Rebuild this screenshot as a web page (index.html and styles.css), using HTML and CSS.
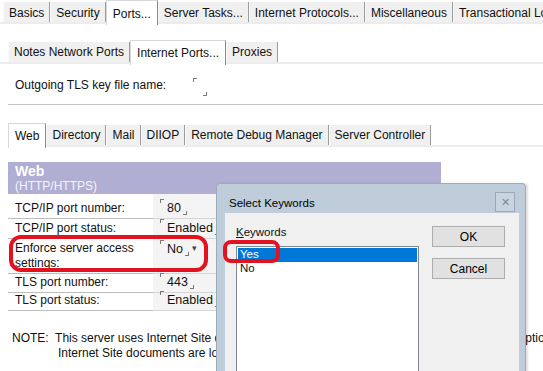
FILE: index.html
```html
<!DOCTYPE html>
<html lang="en">
<head>
    <meta charset="UTF-8">
    <title>Server Document - Ports</title>
    <link rel="stylesheet" href="styles.css">
</head>
<body>
    <div class="tabs top-tabs">
        <a class="tab">Basics</a>
        <a class="tab">Security</a>
        <a class="tab active">Ports...</a>
        <a class="tab">Server Tasks...</a>
        <a class="tab">Internet Protocols...</a>
        <a class="tab">Miscellaneous</a>
        <a class="tab">Transactional Logging</a>
    </div>

    <div class="tabs sub-tabs">
        <a class="tab">Notes Network Ports</a>
        <a class="tab active">Internet Ports...</a>
        <a class="tab">Proxies</a>
    </div>

    <div class="field-row">
        <span class="field-label">Outgoing TLS key file name:</span>
        <span class="field"><span class="mk-tl"></span><span class="mk-br"></span></span>
    </div>

    <div class="tabs proto-tabs">
        <a class="tab active">Web</a>
        <a class="tab">Directory</a>
        <a class="tab">Mail</a>
        <a class="tab">DIIOP</a>
        <a class="tab">Remote Debug Manager</a>
        <a class="tab">Server Controller</a>
    </div>

    <div class="settings">
        <div class="settings-head">
            <div class="head-title">Web</div>
            <div class="head-sub">(HTTP/HTTPS)</div>
        </div>
        <div class="cell label">TCP/IP port number:</div>
        <div class="cell value"><span class="val"><span class="mk-tl"></span>80<span class="mk-br"></span></span></div>
        <div class="cell label">TCP/IP port status:</div>
        <div class="cell value"><span class="val"><span class="mk-tl"></span>Enabled<span class="mk-br"></span></span></div>
        <div class="cell label">Enforce server access<br>settings:</div>
        <div class="cell value value-top"><span class="val"><span class="mk-tl"></span>No<span class="mk-br"></span><span class="drop">&#9662;</span></span></div>
        <div class="cell label">TLS port number:</div>
        <div class="cell value"><span class="val"><span class="mk-tl"></span>443<span class="mk-br"></span></span></div>
        <div class="cell label">TLS port status:</div>
        <div class="cell value"><span class="val"><span class="mk-tl"></span>Enabled<span class="mk-br"></span></span></div>
    </div>

    <p class="note">NOTE:&nbsp; This server uses Internet Site documents to configure Internet protocols. All server port options<br>Internet Site documents are located in the Web Configurations view.</p>

    <!-- highlight marks drawn over the form -->
    <div class="mark mark-row"></div>

    <!-- Select Keywords dialog -->
    <div class="dialog">
        <div class="dialog-title">
            <span>Select Keywords</span>
            <span class="dialog-close">&#10005;</span>
        </div>
        <div class="dialog-body">
            <div class="keywords">
                <div class="kw-label"><u>K</u>eywords</div>
                <div class="kw-list">
                    <div class="kw-item selected">Yes</div>
                    <div class="kw-item">No</div>
                </div>
            </div>
            <div class="dialog-buttons">
                <button class="btn">OK</button>
                <button class="btn">Cancel</button>
            </div>
        </div>
    </div>

    <div class="mark mark-yes"></div>
</body>
</html>
```

FILE: styles.css
```css
body {
    font-family: "Liberation Sans", Arial, sans-serif;
    font-size: 12px;
    color: #111;
    margin: 0;
    background: #fff;
    overflow: hidden;
}
.tabs {
    display: flex;
    height: 22px;
    border-bottom: 2px solid #ececec;
    white-space: nowrap;
}
.tab {
    background: #f0f0f0;
    border-right: 1px solid #9c9c9c;
    border-left: 1px solid #fafafa;
    padding: 0 5px;
    line-height: 21px;
    margin-top: 2px;
    cursor: pointer;
}
.tab.active {
    background: #fff;
    margin-top: 0;
    height: 24px;
    line-height: 24px;
    border-left: 1px solid #d8d8d8;
    border-top: 1px solid #d8d8d8;
    border-right: 1px solid #8a8a8a;
    padding: 0 6px;
}
.top-tabs {
    padding-left: 3px;
}
.top-tabs .tab {
    line-height: 23px;
}
.top-tabs .tab.active {
    line-height: 26px;
}
.sub-tabs {
    margin-top: 16px;
    padding-left: 8px;
}
.proto-tabs {
    margin: 18px 0 0 8px;
}
.field-row {
    margin-left: 8px;
    height: 38px;
    border-bottom: 1px solid #c4c4c4;
    display: flex;
    align-items: center;
    padding: 2px 0 0 7px;
}
.field {
    position: relative;
    display: inline-block;
    width: 14px;
    height: 16px;
    margin-left: 27px;
    top: 1px;
}
.field .mk-tl {
    position: absolute;
    left: 0;
    top: 0;
}
.field .mk-br {
    position: absolute;
    right: 0;
    bottom: -2px;
}
.mk-tl, .mk-br {
    display: inline-block;
    width: 3px;
    height: 3px;
}
.mk-tl {
    border-top: 1px solid #7a7a7a;
    border-left: 1px solid #7a7a7a;
    vertical-align: 9px;
    margin-right: 3px;
}
.mk-br {
    border-bottom: 1px solid #7a7a7a;
    border-right: 1px solid #7a7a7a;
    vertical-align: -3px;
    margin-left: 2px;
}
.settings {
    margin: 15px 0 0 8px;
    width: 433px;
    display: grid;
    grid-template-columns: 145px 1fr;
    grid-template-rows: 32px 25px 20px 35px 19px 18px;
}
.settings-head {
    grid-column: 1 / 3;
    background: #b0aed2;
    color: #fff;
    padding: 1px 7px 0;
}
.head-title {
    font-weight: bold;
    font-size: 14px;
    line-height: 16px;
}
.head-sub {
    line-height: 14px;
    color: #f4f4fb;
}
.cell {
    border-bottom: 1px solid #bdbdbd;
    line-height: 15px;
    padding-bottom: 2px;
    display: flex;
    align-items: flex-end;
    box-sizing: border-box;
}
.label {
    padding-left: 7px;
}
.value {
    background: #f4f4f4;
    padding-left: 7px;
    border-bottom-color: #d6d6d6;
    font-size: 12.5px;
}
.value-top {
    align-items: flex-start;
    padding-top: 1px;
}
.val {
    white-space: nowrap;
}
.drop {
    font-size: 9px;
    color: #444;
    margin-left: 3px;
    vertical-align: 2px;
}
.note {
    margin: 20px 0 0 58px;
    text-indent: -46px;
    line-height: 15px;
    white-space: nowrap;
}
.mark {
    position: absolute;
    border: 4px solid #e3121f;
    box-sizing: border-box;
}
.mark-row {
    left: 9px;
    top: 235px;
    width: 199px;
    height: 37px;
    border-radius: 12px;
}
.mark-yes {
    left: 223px;
    top: 240px;
    width: 57px;
    height: 23px;
    border-radius: 8px;
}
.dialog {
    position: absolute;
    left: 216px;
    top: 183px;
    width: 308px;
    height: 200px;
    background: #bfcddb;
    border: 1px solid #9aabbd;
    border-radius: 4px 4px 0 0;
    box-shadow: 2px 0 2px rgba(0, 0, 0, 0.12);
    font-size: 11.5px;
}
.dialog-title {
    height: 29px;
    display: flex;
    justify-content: space-between;
    align-items: center;
    padding: 0 10px 0 12px;
    color: #000;
}
.dialog-title span:first-child {
    margin-top: 8px;
}
.dialog-close {
    width: 18px;
    height: 18px;
    border: 1px solid #9aa9b8;
    background: #c8d4e0;
    color: #7d8894;
    font-size: 11px;
    display: flex;
    align-items: center;
    justify-content: center;
    margin-top: 7px;
}
.dialog-body {
    background: #f0f0f0;
    margin: 0 6px 0 8px;
    height: 170px;
    display: flex;
    padding: 11px 0 0 11px;
    box-sizing: border-box;
}
.keywords {
    width: 183px;
}
.kw-label {
    line-height: 16px;
    margin-bottom: 6px;
}
.kw-list {
    background: #fff;
    border: 1px solid #828790;
    height: 140px;
    padding: 1px;
}
.kw-item {
    line-height: 13px;
    height: 14px;
    padding-left: 2px;
}
.kw-item.selected {
    background: #0078d7;
    color: #fff;
}
.dialog-buttons {
    display: flex;
    flex-direction: column;
    gap: 11px;
    margin: 2px 0 0 13px;
}
.btn {
    width: 73px;
    height: 21px;
    background: #e1e1e1;
    border: 1px solid #adadad;
    font-family: "Liberation Sans", Arial, sans-serif;
    font-size: 12px;
    color: #000;
    padding: 0;
}
```
